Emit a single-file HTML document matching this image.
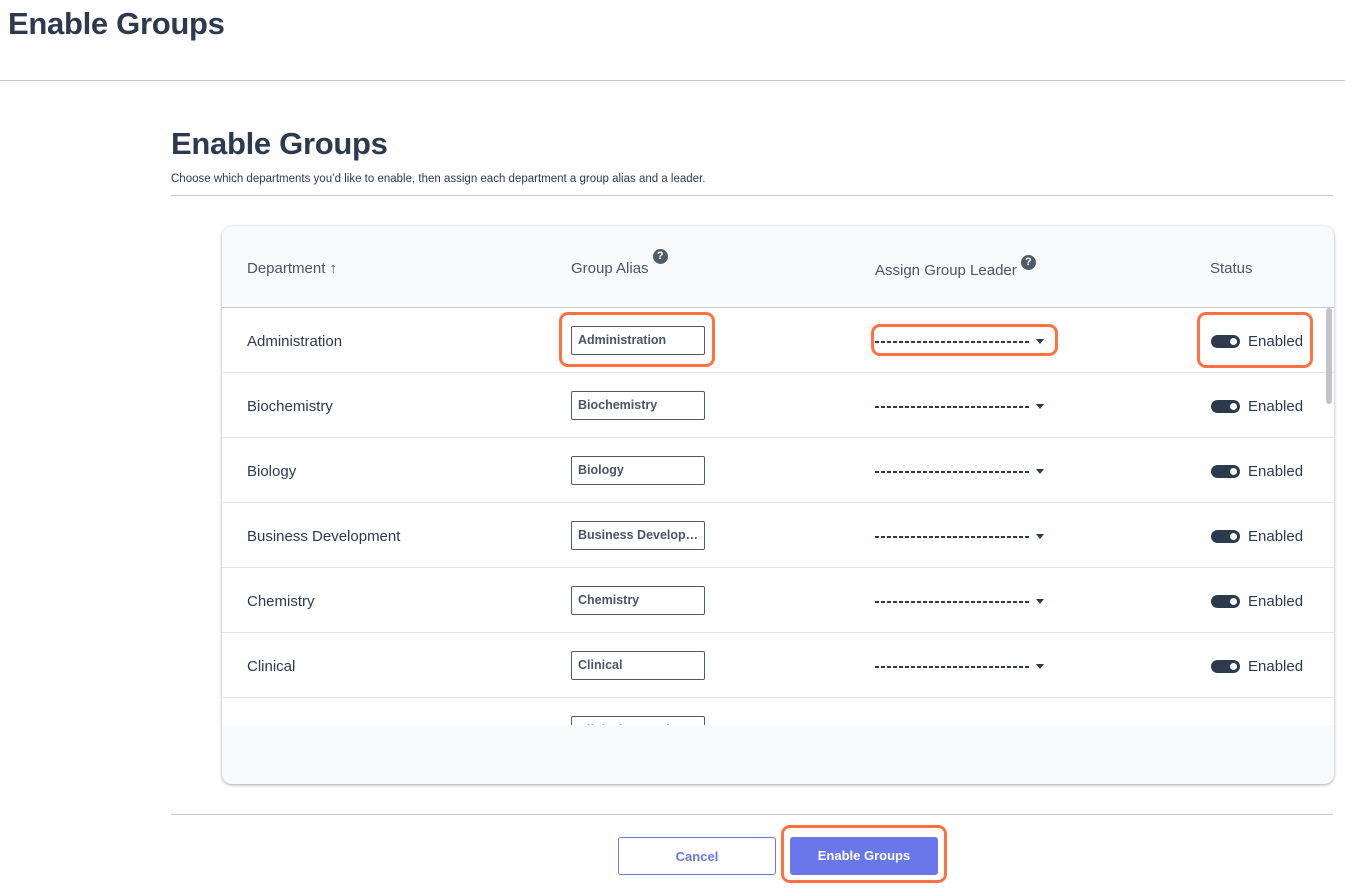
<!DOCTYPE html>
<html><head><style>
*{box-sizing:border-box;margin:0;padding:0}
body{width:1345px;height:896px;background:#fff;font-family:"Liberation Sans",sans-serif;color:#2c3a4f;position:relative;overflow:hidden}
.abs{position:absolute}
h1{position:absolute;font-size:31px;font-weight:bold;letter-spacing:-0.3px;color:#2c3a4f}
.hr{position:absolute;height:1px;background:#c8c8c8}
.card{position:absolute;left:222px;top:226px;width:1112px;height:558px;border-radius:10px;background:#f9fafc;box-shadow:0 1px 3px rgba(0,0,0,.35);overflow:hidden}
.th{position:absolute;top:34px;font-size:15px;color:#4a5566}
.q{display:inline-block;width:15px;height:15px;border-radius:50%;background:#4f5b68;color:#fff;font-size:11px;font-weight:bold;text-align:center;line-height:15px;vertical-align:top}
.body{position:absolute;left:0;top:81px;width:1112px;height:418px;background:#fff;border-top:1px solid #c8c8c8;overflow:hidden}
.row{position:relative;height:65px;border-bottom:1px solid #e2e4e8}
.dn{position:absolute;left:25px;top:25px;font-size:15px;color:#2c3a4f}
.in{position:absolute;left:349px;top:18px;width:134px;height:29px;border:1px solid #4f5b68;border-radius:2px;font-size:12.5px;font-weight:bold;color:#4a5566;padding:6px 6px;white-space:nowrap;overflow:hidden}
.dd{position:absolute;left:653px;top:33px;width:155px;height:2px;background:repeating-linear-gradient(90deg,#2c3a4f 0 4px,transparent 4px 6px)}
.arr{position:absolute;left:814px;top:31px;width:0;height:0;border-left:4px solid transparent;border-right:4px solid transparent;border-top:5px solid #2c3a4f}
.tg{position:absolute;left:989px;top:27px;width:29px;height:13px;border-radius:7px;background:#2c3a4f}
.tg:after{content:"";position:absolute;right:3px;top:3px;width:7px;height:7px;border-radius:50%;background:#fff}
.en{position:absolute;left:1026px;top:25px;font-size:15px;color:#2c3a4f}
.hl{position:absolute;border:3px solid #ff7140;border-radius:9px}
.btn{position:absolute;top:837px;height:38px;border-radius:3px;font-size:13px;font-weight:bold;text-align:center;line-height:38px}
</style></head><body>
<h1 style="left:8px;top:6px">Enable Groups</h1>
<div class="hr" style="left:0;top:80px;width:1345px"></div>
<h1 style="left:171px;top:126px">Enable Groups</h1>
<div class="abs" style="left:171px;top:173px;font-size:11.5px;color:#2c3a4f">Choose which departments you’d like to enable, then assign each department a group alias and a leader.</div>
<div class="hr" style="left:171px;top:195px;width:1162px"></div>
<div class="card">
<div class="th" style="left:25px">Department <b>↑</b></div>
<div class="th" style="left:349px">Group Alias <span class="q" style="margin-top:-11px">?</span></div>
<div class="th" style="left:653px;top:36px">Assign Group Leader <span class="q" style="margin-top:-7px">?</span></div>
<div class="th" style="left:988px">Status</div>
<div class="body">
<div class="row"><div class="dn">Administration</div><div class="in">Administration</div><div class="dd"></div><div class="arr"></div><div class="tg"></div><div class="en">Enabled</div></div>
<div class="row"><div class="dn">Biochemistry</div><div class="in">Biochemistry</div><div class="dd"></div><div class="arr"></div><div class="tg"></div><div class="en">Enabled</div></div>
<div class="row"><div class="dn">Biology</div><div class="in">Biology</div><div class="dd"></div><div class="arr"></div><div class="tg"></div><div class="en">Enabled</div></div>
<div class="row"><div class="dn">Business Development</div><div class="in">Business Develop…</div><div class="dd"></div><div class="arr"></div><div class="tg"></div><div class="en">Enabled</div></div>
<div class="row"><div class="dn">Chemistry</div><div class="in">Chemistry</div><div class="dd"></div><div class="arr"></div><div class="tg"></div><div class="en">Enabled</div></div>
<div class="row"><div class="dn">Clinical</div><div class="in">Clinical</div><div class="dd"></div><div class="arr"></div><div class="tg"></div><div class="en">Enabled</div></div>
<div class="row"><div class="dn">Clinical Operations</div><div class="in">Clinical Operations</div><div class="dd"></div><div class="arr"></div><div class="tg"></div><div class="en">Enabled</div></div>
<div class="abs" style="left:1104px;top:0;width:6px;height:96px;border-radius:3px;background:#c4c4c8"></div>
</div>
</div>
<div class="hl" style="left:559px;top:312px;width:156px;height:55px"></div>
<div class="hl" style="left:871px;top:324px;width:187px;height:32px"></div>
<div class="hl" style="left:1197px;top:312px;width:116px;height:56px"></div>
<div class="hr" style="left:171px;top:814px;width:1162px"></div>
<div class="btn" style="left:618px;width:158px;border:1px solid #6a77ea;color:#6a77ea;background:#fff">Cancel</div>
<div class="btn" style="left:790px;width:148px;background:#6a77ea;color:#fff">Enable Groups</div>
<div class="hl" style="left:781px;top:825px;width:166px;height:58px"></div>
</body></html>
